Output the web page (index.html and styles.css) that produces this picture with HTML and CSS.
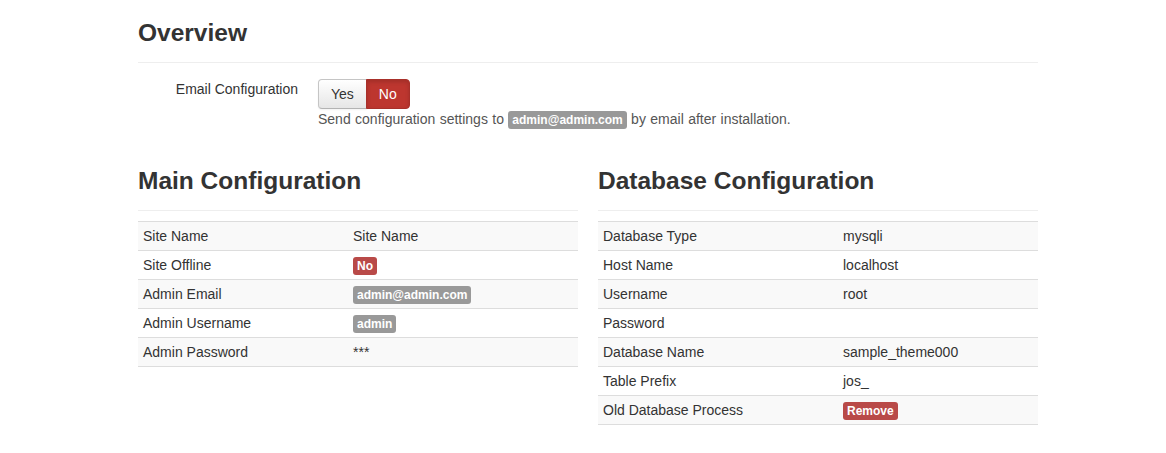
FILE: index.html
```html
<!DOCTYPE html>
<html>
<head>
<meta charset="utf-8">
<link rel="stylesheet" href="styles.css">
</head>
<body>
<div class="container">
  <div class="page-header">
    <h3>Overview</h3>
  </div>
  <div class="control-group">
    <label class="control-label">Email Configuration</label>
    <div class="controls">
      <div class="btn-group">
        <span class="btn">Yes</span><span class="btn btn-danger">No</span>
      </div>
      <p class="help-block">Send configuration settings to <span class="label">admin@admin.com</span> by email after installation.</p>
    </div>
  </div>
  <div class="row">
    <div class="span">
      <div class="page-header"><h3>Main Configuration</h3></div>
      <table class="table table-main">
        <colgroup><col class="col-key"><col class="col-val"></colgroup>
        <tr><td>Site Name</td><td>Site Name</td></tr>
        <tr><td>Site Offline</td><td><span class="label label-important">No</span></td></tr>
        <tr><td>Admin Email</td><td><span class="label">admin@admin.com</span></td></tr>
        <tr><td>Admin Username</td><td><span class="label">admin</span></td></tr>
        <tr><td>Admin Password</td><td>***</td></tr>
      </table>
    </div>
    <div class="span">
      <div class="page-header"><h3>Database Configuration</h3></div>
      <table class="table table-db">
        <colgroup><col class="col-key"><col class="col-val"></colgroup>
        <tr><td>Database Type</td><td>mysqli</td></tr>
        <tr><td>Host Name</td><td>localhost</td></tr>
        <tr><td>Username</td><td>root</td></tr>
        <tr><td>Password</td><td></td></tr>
        <tr><td>Database Name</td><td>sample_theme000</td></tr>
        <tr><td>Table Prefix</td><td>jos_</td></tr>
        <tr><td>Old Database Process</td><td><span class="label label-important">Remove</span></td></tr>
      </table>
    </div>
  </div>
</div>
</body>
</html>
```
FILE: styles.css
```css
html, body {
  margin: 0;
  padding: 0;
  background: #fff;
}
body {
  font-family: "Liberation Sans", Arial, Helvetica, sans-serif;
  font-size: 14px;
  line-height: 20px;
  color: #333;
}
.container {
  width: 900px;
  margin: 0 auto;
  padding: 2px 0 0 10px;
}
.page-header {
  padding-bottom: 9px;
  border-bottom: 1px solid #eee;
  margin: 0 0 16px;
}
.page-header h3 {
  margin: 11px 0 0;
  font-size: 24.5px;
  line-height: 40px;
  font-weight: bold;
  color: #333;
}
.control-group {
  display: flex;
  margin-bottom: 32px;
}
.control-label {
  width: 160px;
  text-align: right;
  flex: none;
}
.controls {
  margin-left: 20px;
}
.btn-group {
  display: flex;
}
.btn {
  display: inline-block;
  padding: 4px 12px;
  line-height: 20px;
  font-size: 14px;
  color: #333;
  background: linear-gradient(#ffffff, #e6e6e6);
  border: 1px solid #c5c5c5;
  border-bottom-color: #b3b3b3;
  border-radius: 4px 0 0 4px;
  box-shadow: inset 0 1px 0 rgba(255,255,255,.2), 0 1px 2px rgba(0,0,0,.05);
}
.btn-danger {
  color: #fff;
  background: #bd362f;
  border-color: #a8302a;
  border-radius: 0 4px 4px 0;
  margin-left: -1px;
  box-shadow: inset 0 2px 4px rgba(0,0,0,.15);
}
.help-block {
  margin: 0;
  color: #555;
  word-spacing: 0.5px;
}
.label {
  display: inline-block;
  padding: 2px 4px;
  font-size: 12px;
  font-weight: bold;
  line-height: 14px;
  color: #fff;
  background: #999;
  border-radius: 3px;
  vertical-align: baseline;
  white-space: nowrap;
  word-spacing: 0;
}
.label-important {
  background: #b94a48;
}
.row {
  display: flex;
  gap: 20px;
}
.span {
  width: 440px;
  flex: none;
}
.row .page-header {
  margin-bottom: 10px;
}
.row .page-header h3 {
  margin-top: 0;
}
.table {
  width: 440px;
  table-layout: fixed;
  border-collapse: collapse;
  border-spacing: 0;
  border-bottom: 1px solid #ddd;
}
.table td {
  padding: 4px 5px;
  line-height: 20px;
  text-align: left;
  vertical-align: top;
  border-top: 1px solid #ddd;
}
.table tr:nth-child(odd) td {
  background: #f9f9f9;
}
.table-main .col-key {
  width: 210px;
}
.table-main .col-val {
  width: 230px;
}
.table-db .col-key {
  width: 240px;
}
.table-db .col-val {
  width: 200px;
}
```
